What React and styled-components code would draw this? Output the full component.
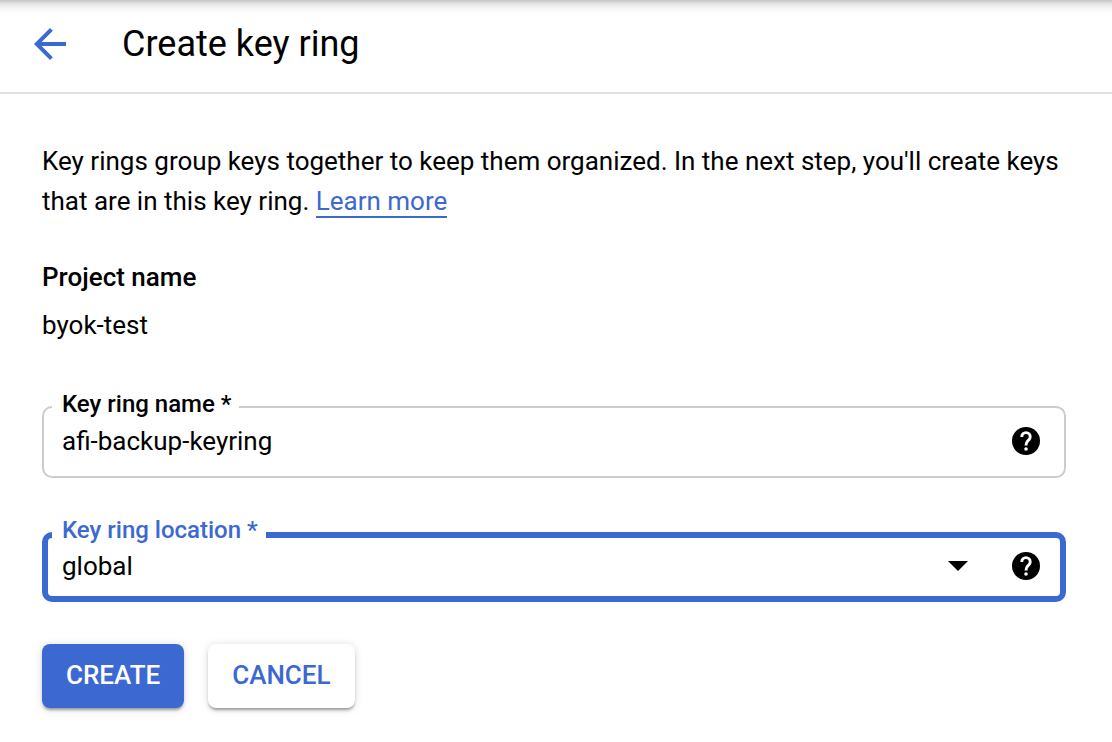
import React, {useState} from "react";
import styled, {createGlobalStyle} from "styled-components";

const GlobalStyle = createGlobalStyle`
    * {
        box-sizing: border-box;
    }
    body {
        margin: 0;
        background: #fff;
        color: #000;
        font-family: Roboto, sans-serif;
        font-size: 26px;
    }
`;

const StyledHeader = styled.header`
    display: flex;
    align-items: center;
    gap: 48px;
    height: 94px;
    padding: 0 26px 4px;
    border-bottom: 2px solid #e0e0e0;
    background: linear-gradient(#c6c6c6, #e4e4e4 4px, #f8f8f8 9px, #fff 14px);
`;

const StyledBackButton = styled.button`
    display: flex;
    padding: 0;
    border: none;
    background: none;
    color: #3b69d1;
    cursor: pointer;
`;

const StyledTitle = styled.h1`
    margin: 0;
    font-size: 36px;
    font-weight: 400;
    line-height: 48px;
`;

const StyledForm = styled.form`
    display: flex;
    flex-direction: column;
    padding: 47px 46px 32px 42px;
`;

const StyledText = styled.p`
    margin: 0;
    line-height: 40px;
`;

const StyledLink = styled.a`
    color: #3b69d1;
    text-decoration: none;
    border-bottom: 2px solid #3b69d1;
`;

const StyledSubtitle = styled.h2`
    margin: 36px 0 8px;
    font-size: 26px;
    font-weight: 500;
    line-height: 40px;
`;

const StyledField = styled.fieldset`
    min-width: 0;
    margin: ${props => props.$active ? "42px" : "49px"} 0 0;
    padding: ${props => props.$active ? "0 20px 14px 14px" : "0 24px 14px 18px"};
    border: ${props => props.$active ? "6px solid #3b69d1" : "2px solid #ccc"};
    border-radius: 10px;
`;

const StyledLegend = styled.legend`
    padding: 0 8px ${props => props.$active ? "10px" : "6px"} 10px;
    margin-left: -10px;
    color: ${props => props.$active ? "#3b69d1" : "#000"};
    font-size: 24px;
    font-weight: 500;
    line-height: 20px;
`;

const StyledRow = styled.div`
    display: flex;
    align-items: center;
    height: ${props => props.$active ? "32px" : "42px"};
`;

const StyledInput = styled.input`
    flex: 1;
    min-width: 0;
    padding: 0;
    border: none;
    outline: none;
    background: none;
    color: #000;
    font: inherit;
`;

const StyledSelectBox = styled.div`
    display: flex;
    flex: 1;
    align-items: center;
    min-width: 0;
    margin-right: 44px;
`;

const StyledSelect = styled.select`
    flex: 1;
    min-width: 0;
    padding: 0;
    border: none;
    outline: none;
    background: none;
    color: #000;
    font: inherit;
    appearance: none;
`;

const StyledHelp = styled.button`
    display: flex;
    padding: 0;
    border: none;
    background: none;
    color: #000;
    cursor: pointer;
`;

const StyledActions = styled.div`
    display: flex;
    gap: 24px;
    margin-top: 42px;
`;

const StyledButton = styled.button`
    height: 64px;
    padding: 0 24px 2px;
    border: none;
    border-radius: 8px;
    background: ${props => props.$primary ? "#3b69d1" : "#fff"};
    color: ${props => props.$primary ? "#fff" : "#3b69d1"};
    box-shadow: 0 3px 3px -1px rgba(0, 0, 0, 0.35), 0 1px 8px rgba(0, 0, 0, 0.15);
    font: 500 26px Roboto, sans-serif;
    cursor: pointer;
`;

const HelpButton = ({label}) => (
    <StyledHelp type="button" aria-label={label}>
        <svg width="28" height="28" viewBox="2 2 20 20" fill="currentColor">
            <circle cx="12" cy="12" r="10"/>
            <path d="M9 9.2V9a3 3 0 0 1 6 0c0 .83-.35 1.5-.9 2.05l-.9.9C12.4 12.8 12 13.5 12 15.2" fill="none" stroke="#fff" strokeWidth="2.1"/>
            <circle cx="12" cy="17.7" r="1.3" fill="#fff"/>
        </svg>
    </StyledHelp>
);

const App = () => {
    const [name, setName] = useState("afi-backup-keyring");
    const [location, setLocation] = useState("global");

    return(
        <>
            <GlobalStyle/>
            <StyledHeader>
                <StyledBackButton type="button" aria-label="Back">
                    <svg width="48" height="48" viewBox="0 0 24 24" fill="currentColor">
                        <path d="M20 11H7.83l5.59-5.59L12 4l-8 8 8 8 1.41-1.41L7.83 13H20v-2z"/>
                    </svg>
                </StyledBackButton>
                <StyledTitle>Create key ring</StyledTitle>
            </StyledHeader>
            <StyledForm onSubmit={(e) => e.preventDefault()}>
                <StyledText>
                    Key rings group keys together to keep them organized. In the next step, you'll create keys
                    that are in this key ring. <StyledLink href="#learn-more">Learn more</StyledLink>
                </StyledText>
                <StyledSubtitle>Project name</StyledSubtitle>
                <StyledText>byok-test</StyledText>
                <StyledField>
                    <StyledLegend><label htmlFor="name">Key ring name *</label></StyledLegend>
                    <StyledRow>
                        <StyledInput id="name" value={name} onChange={(e) => setName(e.target.value)}/>
                        <HelpButton label="About the key ring name"/>
                    </StyledRow>
                </StyledField>
                <StyledField $active>
                    <StyledLegend $active><label htmlFor="location">Key ring location *</label></StyledLegend>
                    <StyledRow $active>
                        <StyledSelectBox>
                            <StyledSelect id="location" value={location} onChange={(e) => setLocation(e.target.value)}>
                                <option value="global">global</option>
                            </StyledSelect>
                            <svg width="20" height="10" viewBox="0 0 20 10"><path d="M0 0h20L10 10z"/></svg>
                        </StyledSelectBox>
                        <HelpButton label="About the key ring location"/>
                    </StyledRow>
                </StyledField>
                <StyledActions>
                    <StyledButton $primary>CREATE</StyledButton>
                    <StyledButton type="button">CANCEL</StyledButton>
                </StyledActions>
            </StyledForm>
        </>
    );
};

export default App;
